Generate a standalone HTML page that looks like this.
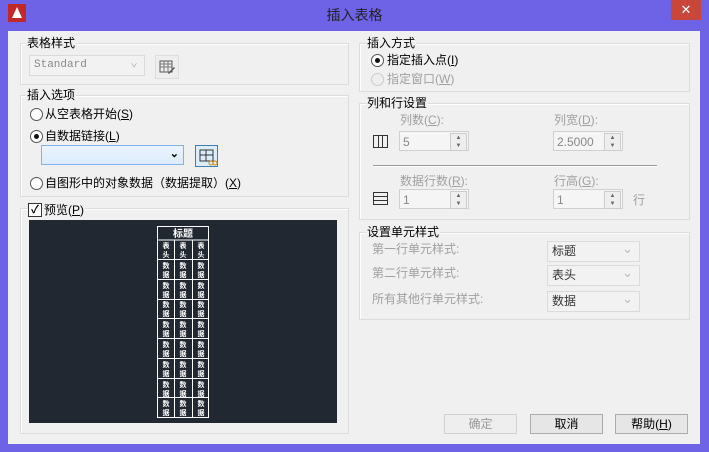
<!DOCTYPE html><html><head><meta charset="utf-8"><style>
body{margin:0;width:709px;height:452px;background:#6e62e6;position:relative;overflow:hidden;font-family:"Liberation Sans","Noto Sans CJK SC",sans-serif;font-size:12px;color:#000}
.a{position:absolute}
.client{position:absolute;left:8px;top:31px;width:692px;height:413px;background:#f0f0f0}
.gb{position:absolute;border:1px solid #dcdcdc;box-shadow:inset 1px 1px 0 #fff}
.lbl{position:absolute;background:#f0f0f0;padding:0 1px;white-space:nowrap;line-height:14px}
.g{color:#a0a0a0}
.rad{position:absolute;width:11px;height:11px;border:1px solid #555;border-radius:50%;background:#fff}
.rad.on:after{content:"";position:absolute;left:3px;top:3px;width:5px;height:5px;border-radius:50%;background:#111}
.spin{position:absolute;height:20px;border:1px solid #d0d0d0;background:#f5f5f5;color:#888;font-size:12px;line-height:20px;padding-left:3px;box-sizing:border-box}
.sb{position:absolute;right:1px;top:1px;width:15px;height:16px;border:1px solid #ccc;background:#eee;font-size:6px;line-height:8px;text-align:center;color:#666}
.cmb{position:absolute;height:21px;border:1px solid #dadada;background:#f2f2f2;box-sizing:border-box;color:#333;line-height:19px;padding-left:4px}
.cmb:after{content:"⌄";position:absolute;right:6px;top:-3px;color:#bbb;font-size:13px}
.btn{position:absolute;width:73px;height:20px;border:1px solid #acacac;background:#e6e6e6;box-sizing:border-box;text-align:center;line-height:18px}
</style></head><body>
<div class="a" style="left:8px;top:4px;width:18px;height:18px;background:#c0282a"><div class="a" style="left:4px;top:3px;width:0;height:0;border-left:5px solid transparent;border-right:5px solid transparent;border-bottom:11px solid #fff"></div></div>
<div class="a" style="left:0;top:5px;width:709px;text-align:center;font-size:14px;color:#222">插入表格</div>
<div class="a" style="left:671px;top:0;width:30px;height:20px;background:#c8473a;color:#fff;text-align:center;line-height:20px;font-size:13px">✕</div>
<div class="client"></div>

<div class="gb" style="left:20px;top:43px;width:327px;height:40px"></div>
<div class="lbl" style="left:26px;top:36px">表格样式</div>
<div class="cmb" style="left:29px;top:55px;width:116px;color:#888;font-family:'Liberation Mono',monospace;font-size:11px">Standard</div>
<div class="a" style="left:155px;top:55px;width:22px;height:22px;border:1px solid #ddd;background:#eee"><svg width="22" height="22"><rect x="4" y="5" width="12" height="11" fill="none" stroke="#555"/><path d="M4 8h12M4 11h12M8 5v11M12 5v11" stroke="#777"/><path d="M12 17l6-6 1 1-6 6z" fill="#555"/></svg></div>

<div class="gb" style="left:20px;top:95px;width:327px;height:100px"></div>
<div class="lbl" style="left:26px;top:88px">插入选项</div>
<div class="rad" style="left:30px;top:108px"></div><div class="lbl" style="left:44px;top:107px">从空表格开始(<u>S</u>)</div>
<div class="rad on" style="left:30px;top:130px"></div><div class="lbl" style="left:44px;top:129px">自数据链接(<u>L</u>)</div>
<div class="a" style="left:41px;top:145px;width:143px;height:20px;border:1px solid #7eb4ea;background:linear-gradient(#eaf3fc,#dcecfc);box-sizing:border-box"><span class="a" style="right:4px;top:1px;font-size:11px;font-weight:bold">⌄</span></div>
<div class="a" style="left:195px;top:145px;width:23px;height:22px;border:1px solid #3c7fb1;background:#dcecfc;box-sizing:border-box"><svg width="22" height="22"><rect x="4" y="4" width="13" height="11" fill="none" stroke="#333"/><path d="M4 9h13M10 4v11" stroke="#333"/><circle cx="15" cy="17" r="2" fill="none" stroke="#c80"/><circle cx="19" cy="17" r="2" fill="none" stroke="#c80"/></svg></div>
<div class="rad" style="left:30px;top:177px"></div><div class="lbl" style="left:44px;top:176px">自图形中的对象数据（数据提取）(<u>X</u>)</div>

<div class="gb" style="left:20px;top:208px;width:327px;height:224px"></div>
<div class="a" style="left:28px;top:203px;width:12px;height:12px;border:1px solid #333;background:#fff;font-size:11px;line-height:12px;text-align:center;font-weight:bold">✓</div>
<div class="lbl" style="left:43px;top:203px">预览(<u>P</u>)</div>
<div class="a" style="left:29px;top:220px;width:308px;height:203px;background:#222831"></div>
<svg class="a" style="left:157px;top:226px" width="53" height="193">
<g stroke="#fff" fill="none" stroke-width="1"><rect x="0.5" y="0.5" width="51" height="191"/><path d="M0 14h52"/>
<path d="M17.5 14v178M35.5 14v178"/>
<path d="M0 33.5h52M0 53.5h52M0 73.5h52M0 92.5h52M0 112.5h52M0 132.5h52M0 152.5h52M0 171.5h52"/></g>
<text x="26" y="11" fill="#fff" font-size="10" text-anchor="middle" font-weight="bold" font-family="Noto Sans CJK SC">标题</text>
<g fill="#fff" font-size="7" font-family="Noto Sans CJK SC" text-anchor="middle" font-weight="bold">
<text x="9" y="22">表</text><text x="26" y="22">表</text><text x="44" y="22">表</text>
<text x="9" y="31">头</text><text x="26" y="31">头</text><text x="44" y="31">头</text>
</g>
<g fill="#fff" font-size="7" font-family="Noto Sans CJK SC" text-anchor="middle" font-weight="bold" id="r">
<text x="9" y="42">数</text><text x="26" y="42">数</text><text x="44" y="42">数</text><text x="9" y="51">据</text><text x="26" y="51">据</text><text x="44" y="51">据</text>
</g>
<use href="#r" y="20"/><use href="#r" y="39"/><use href="#r" y="59"/><use href="#r" y="79"/><use href="#r" y="99"/><use href="#r" y="119"/><use href="#r" y="138"/>
</svg>

<div class="gb" style="left:359px;top:43px;width:329px;height:47px"></div>
<div class="lbl" style="left:366px;top:36px">插入方式</div>
<div class="rad on" style="left:371px;top:54px"></div><div class="lbl" style="left:386px;top:53px">指定插入点(<u>I</u>)</div>
<div class="rad" style="left:371px;top:73px;border-color:#ccc;background:#eee"></div><div class="lbl g" style="left:386px;top:72px">指定窗口(<u>W</u>)</div>

<div class="gb" style="left:359px;top:103px;width:329px;height:115px"></div>
<div class="lbl" style="left:366px;top:96px">列和行设置</div>
<div class="lbl g" style="left:399px;top:113px">列数(<u>C</u>):</div>
<div class="lbl g" style="left:553px;top:113px">列宽(<u>D</u>):</div>
<svg class="a" style="left:372px;top:134px" width="18" height="16"><rect x="1.5" y="1.5" width="14" height="12" fill="none" stroke="#333"/><path d="M6.5 1v13M10.5 1v13" stroke="#333"/></svg>
<div class="spin" style="left:399px;top:131px;width:70px">5<div class="sb">▲<br>▼</div></div>
<div class="spin" style="left:553px;top:131px;width:70px">2.5000<div class="sb">▲<br>▼</div></div>
<div class="a" style="left:373px;top:165px;width:284px;height:1px;background:#999;border-bottom:1px solid #fff"></div>
<div class="lbl g" style="left:399px;top:174px">数据行数(<u>R</u>):</div>
<div class="lbl g" style="left:553px;top:174px">行高(<u>G</u>):</div>
<svg class="a" style="left:372px;top:191px" width="18" height="16"><rect x="1.5" y="1.5" width="14" height="12" fill="none" stroke="#333"/><path d="M1 5.5h15M1 9.5h15" stroke="#333"/></svg>
<div class="spin" style="left:399px;top:189px;width:70px">1<div class="sb">▲<br>▼</div></div>
<div class="spin" style="left:553px;top:189px;width:70px">1<div class="sb">▲<br>▼</div></div>
<div class="lbl g" style="left:632px;top:193px">行</div>

<div class="gb" style="left:359px;top:232px;width:329px;height:86px"></div>
<div class="lbl" style="left:366px;top:225px">设置单元样式</div>
<div class="lbl g" style="left:371px;top:242px">第一行单元样式:</div>
<div class="lbl g" style="left:371px;top:266px">第二行单元样式:</div>
<div class="lbl g" style="left:371px;top:292px">所有其他行单元样式:</div>
<div class="cmb" style="left:547px;top:241px;width:93px">标题</div>
<div class="cmb" style="left:547px;top:265px;width:93px">表头</div>
<div class="cmb" style="left:547px;top:291px;width:93px">数据</div>

<div class="btn" style="left:444px;top:414px;color:#999;border-color:#d0d0d0;background:#eee">确定</div>
<div class="btn" style="left:530px;top:414px">取消</div>
<div class="btn" style="left:615px;top:414px">帮助(<u>H</u>)</div>
</body></html>
